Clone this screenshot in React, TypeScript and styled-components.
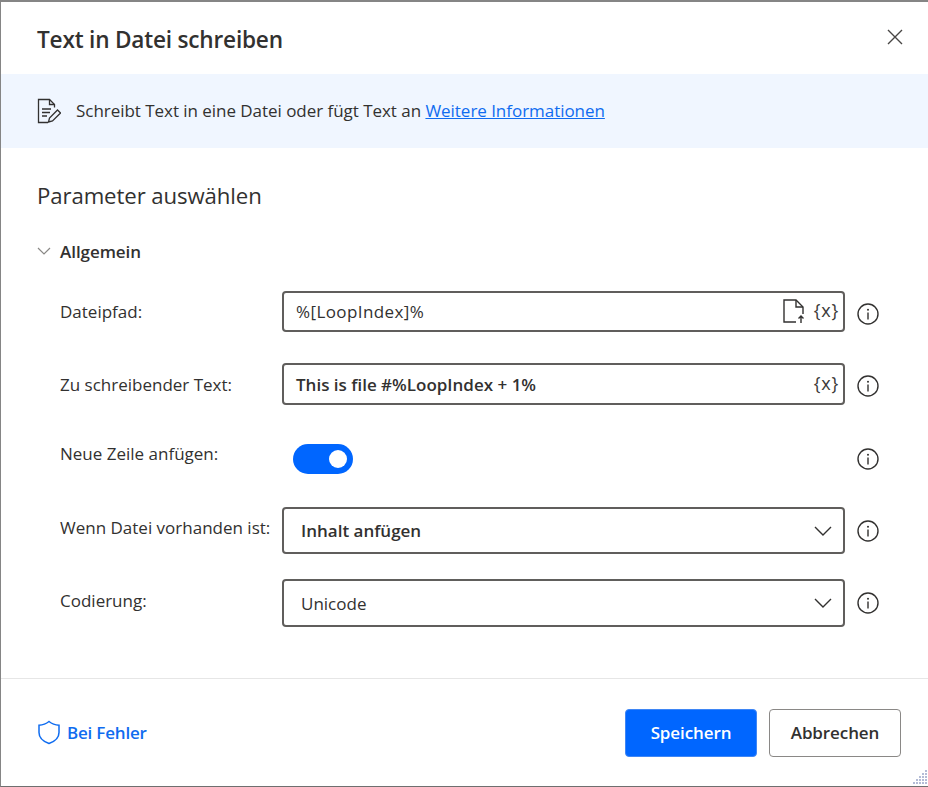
import React from "react";
import styled, { createGlobalStyle } from "styled-components";

const GlobalStyle = createGlobalStyle`
	html, body {
		margin: 0;
		padding: 0;
		background: #fff;
	}
	* {
		box-sizing: border-box;
	}
`;

const Dialog = styled.div`
	position: relative;
	width: 928px;
	height: 787px;
	display: flex;
	flex-direction: column;
	background: #fff;
	border-top: 2px solid #858585;
	border-left: 1px solid #858585;
	border-bottom: 1px solid #6f6f6f;
	font-family: "Open Sans", "Noto Sans", sans-serif;
	color: #323130;
	overflow: hidden;
`;

const Header = styled.header`
	height: 72px;
	flex: none;
	display: flex;
	align-items: center;
	justify-content: space-between;
	padding: 2px 25px 0 36px;
`;

const Title = styled.h1`
	margin: 0;
	font-size: 22.6px;
	font-weight: 600;
	letter-spacing: -0.2px;
	color: #323130;
`;

const CloseButton = styled.button`
	border: 0;
	padding: 0;
	background: none;
	display: flex;
	height: 16px;
	margin-top: -5px;
`;

const Banner = styled.div`
	height: 74px;
	flex: none;
	display: flex;
	align-items: center;
	gap: 15px;
	padding: 0 0 0 36px;
	background: #f0f6ff;
	font-size: 17px;
	letter-spacing: -0.04px;
`;

const BannerText = styled.span`
	margin-top: -2px;
`;

const BannerLink = styled.a`
	color: #0f6cf0;
	text-decoration: underline;
`;

const Content = styled.main`
	flex: 1;
	padding: 30px 0 0 36px;
`;

const SectionTitle = styled.h2`
	margin: 0;
	height: 36px;
	line-height: 36px;
	font-size: 22.2px;
	font-weight: 400;
	letter-spacing: -0.1px;
`;

const GroupHeader = styled.div`
	margin-top: 25px;
	height: 24px;
	display: flex;
	align-items: center;
	gap: 9px;
	font-size: 17px;
	font-weight: 600;
	letter-spacing: -0.05px;
`;

const Rows = styled.div`
	margin-top: 28px;
	padding-left: 23px;
	display: flex;
	flex-direction: column;
`;

const Row = styled.div<{ $height: number; $gap: number }>`
	height: ${(p) => p.$height}px;
	margin-bottom: ${(p) => p.$gap}px;
	display: grid;
	grid-template-columns: 222px 563px 46px;
	align-items: center;
`;

const Label = styled.label<{ $raise?: number }>`
	font-size: 17px;
	white-space: nowrap;
	margin-top: ${(p) => -(p.$raise ?? 0)}px;
`;

const Field = styled.div`
	height: 100%;
	display: flex;
	align-items: center;
	border: 2px solid #605e5c;
	border-radius: 4px;
	padding: 0 3px 0 12px;
	font-size: 17px;
	color: #323130;
`;

const FieldValue = styled.span<{ $bold?: boolean; $spread?: boolean }>`
	flex: 1;
	font-weight: ${(p) => (p.$bold ? 600 : 400)};
	letter-spacing: ${(p) => (p.$spread ? "0.4px" : "0")};
`;

const VarButton = styled.span`
	font-size: 18px;
	color: #3b3a39;
	margin-right: 1px;
	margin-top: -3px;
	letter-spacing: 0.8px;
`;

const FileButton = styled.span`
	display: flex;
	margin-right: 9px;
	margin-top: -2px;
`;

const Select = styled(Field)`
	padding: 0 11px 0 17px;
	justify-content: space-between;
`;

const InfoCell = styled.div<{ $drop?: boolean }>`
	display: flex;
	justify-content: center;
	width: 46px;
	margin-top: ${(p) => (p.$drop ? "4px" : "0")};
`;

const Toggle = styled.div`
	width: 60px;
	height: 30px;
	margin-left: 11px;
	border-radius: 15px;
	background: #0066ff;
	display: flex;
	align-items: center;
	justify-content: flex-end;
	padding-right: 6px;
`;

const ToggleThumb = styled.span`
	width: 18px;
	height: 18px;
	border-radius: 50%;
	background: #fff;
`;

const Footer = styled.footer`
	height: 108px;
	flex: none;
	border-top: 1px solid #e6e6e6;
	display: flex;
	align-items: center;
	justify-content: space-between;
	padding: 0 27px 0 36px;
`;

const ErrorLink = styled.a`
	display: flex;
	align-items: center;
	gap: 6px;
	font-size: 17px;
	font-weight: 600;
	letter-spacing: -0.2px;
	color: #0f6cf0;
`;

const Buttons = styled.div`
	display: flex;
	gap: 12px;
`;

const Button = styled.button<{ $primary?: boolean }>`
	width: 132px;
	height: 48px;
	border-radius: 4px;
	font-family: inherit;
	font-size: 17px;
	font-weight: 600;
	letter-spacing: -0.1px;
	border: 1px solid ${(p) => (p.$primary ? "#3f86f5" : "#8a8886")};
	background: ${(p) => (p.$primary ? "#0066ff" : "#fff")};
	color: ${(p) => (p.$primary ? "#fff" : "#323130")};
`;

const Grip = styled.svg`
	position: absolute;
	right: 0;
	bottom: 1px;
`;

const InfoIcon = () => (
	<svg width="22" height="22" viewBox="0 0 22 22" fill="none">
		<circle cx="11" cy="11" r="10" stroke="#323130" strokeWidth="1.4" />
		<rect x="10.3" y="9.5" width="1.4" height="7" fill="#323130" />
		<circle cx="11" cy="6.7" r="1" fill="#323130" />
	</svg>
);

const Chevron = () => (
	<svg width="18" height="10" viewBox="0 0 18 10" fill="none">
		<path d="M1 1l8 8 8-8" stroke="#323130" strokeWidth="1.4" />
	</svg>
);

export default function App() {
	return (
		<>
			<GlobalStyle />
			<Dialog>
				<Header>
					<Title>Text in Datei schreiben</Title>
					<CloseButton aria-label="Schließen">
						<svg width="16" height="16" viewBox="0 0 16 16" fill="none">
							<path d="M1 1l14 14M15 1L1 15" stroke="#484644" strokeWidth="1.4" />
						</svg>
					</CloseButton>
				</Header>
				<Banner>
					<svg width="24" height="26" viewBox="0 0 24 26" fill="none" stroke="#323130" strokeWidth="1.3">
						<path d="M11 24.5H1.5V1.5h11l5 5v3" />
						<path d="M12.5 1.5v5h5" />
						<path d="M5 11h9M5 14.5h8M5 18h5" />
						<path d="M11.5 24l1-4 8-8 3 3-8 8z" />
					</svg>
					<BannerText>
						Schreibt Text in eine Datei oder fügt Text an{" "}
						<BannerLink href="#">Weitere Informationen</BannerLink>
					</BannerText>
				</Banner>
				<Content>
					<SectionTitle>Parameter auswählen</SectionTitle>
					<GroupHeader>
						<svg width="14" height="8" viewBox="0 0 14 8" fill="none">
							<path d="M1 1l6 6 6-6" stroke="#8a8886" strokeWidth="1.2" />
						</svg>
						Allgemein
					</GroupHeader>
					<Rows>
						<Row $height={41} $gap={31}>
							<Label>Dateipfad:</Label>
							<Field>
								<FieldValue $spread>%[LoopIndex]%</FieldValue>
								<FileButton>
									<svg width="22" height="24" viewBox="0 0 22 24" fill="none" stroke="#323130" strokeWidth="1.4">
										<path d="M13 23H1V1h12l7 7v7" />
										<path d="M13 1v7h7" />
										<path d="M18 24v-7M15.500 19.500L18 17l2.500 2.500" />
									</svg>
								</FileButton>
								<VarButton>{"{x}"}</VarButton>
							</Field>
							<InfoCell $drop>
								<InfoIcon />
							</InfoCell>
						</Row>
						<Row $height={42} $gap={39}>
							<Label>Zu schreibender Text:</Label>
							<Field>
								<FieldValue $bold>This is file #%LoopIndex + 1%</FieldValue>
								<VarButton>{"{x}"}</VarButton>
							</Field>
							<InfoCell $drop>
								<InfoIcon />
							</InfoCell>
						</Row>
						<Row $height={30} $gap={33}>
							<Label $raise={12}>Neue Zeile anfügen:</Label>
							<Toggle>
								<ToggleThumb />
							</Toggle>
							<InfoCell>
								<InfoIcon />
							</InfoCell>
						</Row>
						<Row $height={47} $gap={25}>
							<Label $raise={6}>Wenn Datei vorhanden ist:</Label>
							<Select>
								<FieldValue $bold>Inhalt anfügen</FieldValue>
								<Chevron />
							</Select>
							<InfoCell>
								<InfoIcon />
							</InfoCell>
						</Row>
						<Row $height={48} $gap={0}>
							<Label $raise={6}>Codierung:</Label>
							<Select>
								<FieldValue>Unicode</FieldValue>
								<Chevron />
							</Select>
							<InfoCell>
								<InfoIcon />
							</InfoCell>
						</Row>
					</Rows>
				</Content>
				<Footer>
					<ErrorLink>
						<svg width="24" height="25" viewBox="0 0 24 25" fill="none">
							<path
								d="M12 1.500c2.800 2.300 6 3.500 10 3.700v7.300c0 5-3.500 8.700-10 11-6.500-2.300-10-6-10-11V5.200c4-.2 7.200-1.400 10-3.700z"
								stroke="#0f6cf0"
								strokeWidth="1.500"
							/>
						</svg>
						Bei Fehler
					</ErrorLink>
					<Buttons>
						<Button $primary>Speichern</Button>
						<Button>Abbrechen</Button>
					</Buttons>
				</Footer>
				<Grip width="16" height="16" viewBox="0 0 16 16" fill="#b4bcd6">
					<rect x="13" y="1" width="2" height="2" />
					<rect x="10" y="4" width="2" height="2" />
					<rect x="13" y="4" width="2" height="2" />
					<rect x="7" y="7" width="2" height="2" />
					<rect x="10" y="7" width="2" height="2" />
					<rect x="13" y="7" width="2" height="2" />
					<rect x="4" y="10" width="2" height="2" />
					<rect x="7" y="10" width="2" height="2" />
					<rect x="10" y="10" width="2" height="2" />
					<rect x="13" y="10" width="2" height="2" />
					<rect x="1" y="13" width="2" height="2" />
					<rect x="4" y="13" width="2" height="2" />
					<rect x="7" y="13" width="2" height="2" />
					<rect x="10" y="13" width="2" height="2" />
					<rect x="13" y="13" width="2" height="2" />
				</Grip>
			</Dialog>
		</>
	);
}
